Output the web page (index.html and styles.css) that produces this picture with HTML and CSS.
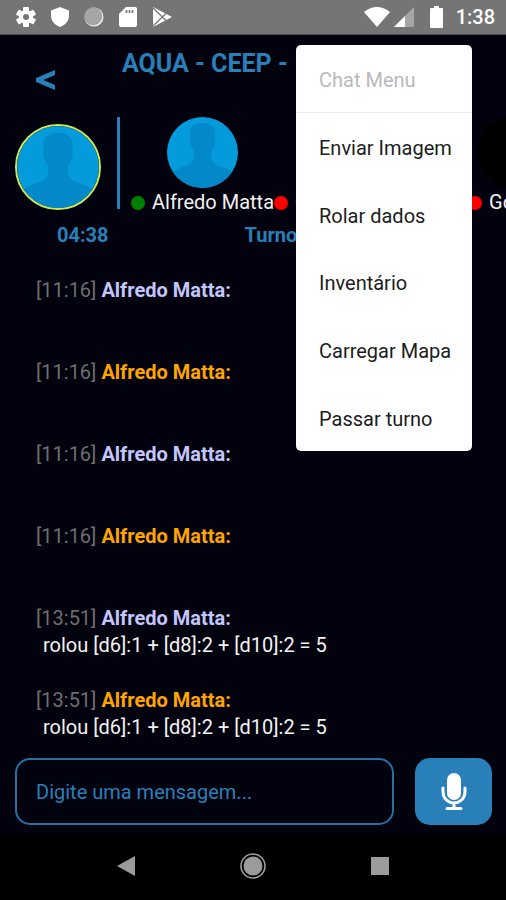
FILE: index.html
```html
<!DOCTYPE html>
<html lang="pt-BR">
<head>
<meta charset="utf-8">
<meta name="viewport" content="width=device-width, initial-scale=1">
<title>AQUA - CEEP</title>
<link rel="stylesheet" href="styles.css">
</head>
<body>
<svg class="sprite" aria-hidden="true">
  <symbol id="avatar" viewBox="0 0 84 84">
    <rect width="84" height="84" fill="#039bdb"/>
    <path d="M27 18Q27 8 42 7Q57 8 57 18V29Q56 37 52 41V47Q53 55 62 58Q73 61 80 67V84H4V67Q11 61 22 58Q31 55 32 47V41Q28 37 27 29Z" fill="#0389c9"/>
  </symbol>
</svg>
<div class="app">
  <div class="status">
    <div class="status-icons">
      <svg width="20" height="20" viewBox="0 0 20 20"><g fill="#fff"><circle cx="10" cy="10" r="7"/><rect x="7" y="0" width="6" height="20" rx="1"/><rect x="7" y="0" width="6" height="20" rx="1" transform="rotate(60 10 10)"/><rect x="7" y="0" width="6" height="20" rx="1" transform="rotate(120 10 10)"/></g><circle cx="10" cy="10" r="3" fill="#757575"/></svg>
      <svg width="18" height="20" viewBox="0 0 18 20"><path d="M9 0 18 3.5V10Q17 17 9 20Q1 17 0 10V3.5Z" fill="#fff"/></svg>
      <svg width="20" height="20" viewBox="0 0 20 20"><circle cx="10" cy="10" r="9.5" fill="#eee"/><circle cx="9.2" cy="9.2" r="8.6" fill="#a6a6a6" stroke="#999" stroke-width=".8"/></svg>
      <svg width="18" height="20" viewBox="0 0 18 20"><path d="M7 0H16Q18 0 18 2V18Q18 20 16 20H2Q0 20 0 18V7Z" fill="#fff"/><path d="M7.500 3V6M10.500 3V6M13.500 3V6" stroke="#757575" stroke-width="1.700"/></svg>
      <svg width="20" height="20" viewBox="0 0 20 20"><path d="M1 0 20 10 1 20Z" fill="#fff"/><path d="M1 1 14.500 14M1 19 14.500 6" stroke="#757575" stroke-width="1.200"/></svg>
    </div>
    <div class="status-icons system">
      <svg width="26" height="20" viewBox="0 0 26 20"><path d="M0 5Q13-5 26 5L13 20Z" fill="#fff"/></svg>
      <svg width="20" height="20" viewBox="0 0 20 20"><path d="M0 20 20 0V20Z" fill="#a6a6a6"/><path d="M0 20 11 9V20Z" fill="#fff"/></svg>
      <svg class="battery" width="13" height="22" viewBox="0 0 13 22"><path d="M4 0H9V2H12Q13 2 13 3V21Q13 22 12 22H1Q0 22 0 21V3Q0 2 1 2H4Z" fill="#fff"/></svg>
      <time class="clock">1:38</time>
    </div>
  </div>

  <header class="header">
    <button class="back" aria-label="Voltar"><svg width="20" height="20" viewBox="0 0 20 20"><path d="M19 0V5L7.500 10 19 15V20L0 12V8Z" fill="#2980b9"/></svg></button>
    <h1 class="title">AQUA - CEEP -</h1>
  </header>

  <section class="players">
    <div class="me"><svg class="me-avatar"><use href="#avatar"/></svg></div>
    <ul class="members">
      <li class="member">
        <svg class="avatar"><use href="#avatar"/></svg>
        <span class="name"><i class="dot online"></i>Alfredo Matta</span>
      </li>
      <li class="member wide">
        <svg class="avatar"><use href="#avatar"/></svg>
        <span class="name"><i class="dot"></i>G</span>
      </li>
      <li class="member short">
        <span class="avatar empty"></span>
        <span class="name"><i class="dot"></i>Go</span>
      </li>
    </ul>
  </section>

  <div class="turn">
    <span class="timer">04:38</span>
    <span>Turno</span>
  </div>

  <main class="chat">
    <article class="message"><p><time>[11:16]</time> <b class="lilac">Alfredo Matta:</b></p></article>
    <article class="message"><p><time>[11:16]</time> <b class="orange">Alfredo Matta:</b></p></article>
    <article class="message"><p><time>[11:16]</time> <b class="lilac">Alfredo Matta:</b></p></article>
    <article class="message"><p><time>[11:16]</time> <b class="orange">Alfredo Matta:</b></p></article>
    <article class="message"><p><time>[13:51]</time> <b class="lilac">Alfredo Matta:</b></p><p class="text">rolou [d6]:1 + [d8]:2 + [d10]:2 = 5</p></article>
    <article class="message"><p><time>[13:51]</time> <b class="orange">Alfredo Matta:</b></p><p class="text">rolou [d6]:1 + [d8]:2 + [d10]:2 = 5</p></article>
  </main>

  <form class="composer">
    <input class="field" type="text" placeholder="Digite uma mensagem..." aria-label="Mensagem">
    <button class="mic" type="button" aria-label="Gravar áudio">
      <svg width="26" height="38" viewBox="0 0 26 38"><rect x="6" y="0" width="14" height="27" rx="7" fill="#fff"/><path d="M2 15V19A11 11 0 0 0 24 19V15M13 30V35M6 35.500H20" fill="none" stroke="#fff" stroke-width="3" stroke-linecap="round"/></svg>
    </button>
  </form>

  <nav class="navbar">
    <button aria-label="Voltar"><svg width="18" height="20" viewBox="0 0 18 20"><path d="M0 10 18 0V20Z" fill="#9b9b9b"/></svg></button>
    <button aria-label="Início"><svg width="26" height="26" viewBox="0 0 26 26"><circle cx="13" cy="13" r="12" fill="none" stroke="#9b9b9b" stroke-width="1.600"/><circle cx="13" cy="13" r="9.500" fill="#9b9b9b"/></svg></button>
    <button aria-label="Recentes"><svg width="18" height="18" viewBox="0 0 18 18"><rect width="18" height="18" fill="#9b9b9b"/></svg></button>
  </nav>

  <div class="menu" role="menu">
    <h2 class="menu-title">Chat Menu</h2>
    <button role="menuitem">Enviar Imagem</button>
    <button role="menuitem">Rolar dados</button>
    <button role="menuitem">Inventário</button>
    <button role="menuitem">Carregar Mapa</button>
    <button role="menuitem">Passar turno</button>
  </div>
</div>
</body>
</html>
```
FILE: styles.css
```css
* {
  box-sizing: border-box;
}

body,
h1,
h2,
p,
ul {
  margin: 0;
  padding: 0;
}

body {
  background: #02020e;
  color: #f2f2f2;
  font: 20px/27px Roboto, sans-serif;
}

button {
  padding: 0;
  border: 0;
  background: none;
  color: inherit;
  font: inherit;
}

svg {
  display: block;
  flex: none;
}

.sprite {
  position: absolute;
  width: 0;
  height: 0;
}

.app {
  position: relative;
  display: flex;
  flex-direction: column;
  min-height: 100vh;
  overflow: hidden;
}

.status {
  display: flex;
  align-items: center;
  justify-content: space-between;
  height: 35px;
  padding: 0 11px 0 16px;
  border-bottom: 1px solid #4c4c4c;
  background: #757575;
}

.status-icons {
  display: flex;
  align-items: center;
  gap: 15px;
}

.system {
  gap: 4px;
}

.battery {
  margin: 0 9px 0 12px;
}

.clock {
  color: #fff;
  font-weight: 500;
}

.header {
  display: flex;
  height: 82px;
  padding: 15px 0 0 36px;
}

.back {
  width: 86px;
  height: 60px;
}

.title {
  color: #2980b9;
  font-size: 25px;
  font-weight: 700;
  line-height: 28px;
  white-space: nowrap;
}

.players {
  display: flex;
  height: 99px;
}

.me {
  flex: none;
  width: 120px;
  height: 92px;
  padding: 7px 0 0 15px;
  border-right: 3px solid #2980b9;
}

.me-avatar {
  width: 86px;
  height: 86px;
  border: 2px solid #d3e84a;
  border-radius: 50%;
}

.members {
  display: flex;
  padding-left: 11px;
  list-style: none;
}

.member {
  display: flex;
  flex: none;
  flex-direction: column;
  align-items: center;
}

.wide {
  width: 194px;
}

.short {
  width: 88px;
}

.avatar {
  width: 71px;
  height: 71px;
  border-radius: 50%;
}

.empty {
  background: #000;
}

.name {
  display: flex;
  align-items: center;
  align-self: flex-start;
  gap: 7px;
  padding-top: 1px;
  white-space: nowrap;
}

.dot {
  width: 14px;
  height: 14px;
  border-radius: 50%;
  background: #f00;
}

.online {
  background: #008000;
}

.turn {
  display: flex;
  gap: 136px;
  padding: 6px 0 0 57px;
  color: #2980b9;
  font-weight: 700;
}

.chat {
  display: flex;
  flex: 1;
  flex-direction: column;
  gap: 28px;
  padding: 28px 36px 17px;
}

.message {
  min-height: 54px;
}

.message time {
  color: #6e6e6e;
}

.lilac {
  color: #c3c6fb;
}

.orange {
  color: #ffa500;
}

.text {
  padding-left: 7px;
}

.composer {
  display: flex;
  gap: 21px;
  padding: 0 14px 8px 15px;
}

.field {
  flex: 1;
  min-width: 0;
  height: 67px;
  padding: 0 19px;
  border: 2px solid #27719f;
  border-radius: 15px;
  background: transparent;
  color: #2980b9;
  font: inherit;
}

.field::placeholder {
  color: #2980b9;
  opacity: 1;
}

.mic {
  display: grid;
  place-items: center;
  width: 77px;
  height: 67px;
  border-radius: 15px;
  background: #2980b9;
}

.navbar {
  display: grid;
  grid-template-columns: repeat(3, 1fr);
  height: 68px;
  padding: 0 63px 2px;
  background: #000;
}

.navbar button {
  display: grid;
  place-items: center;
}

.menu {
  position: absolute;
  top: 45px;
  right: 34px;
  display: grid;
  grid-auto-rows: 1fr;
  width: 176px;
  height: 406px;
  border-radius: 5px;
  background: #fff;
  color: #1c1c1c;
}

.menu button,
.menu-title {
  display: flex;
  align-items: center;
  padding: 4px 16px 0 23px;
  white-space: nowrap;
}

.menu-title {
  border-bottom: 1px solid #ececec;
  color: #b9b9b9;
  font-size: 20px;
  font-weight: 400;
}
```
